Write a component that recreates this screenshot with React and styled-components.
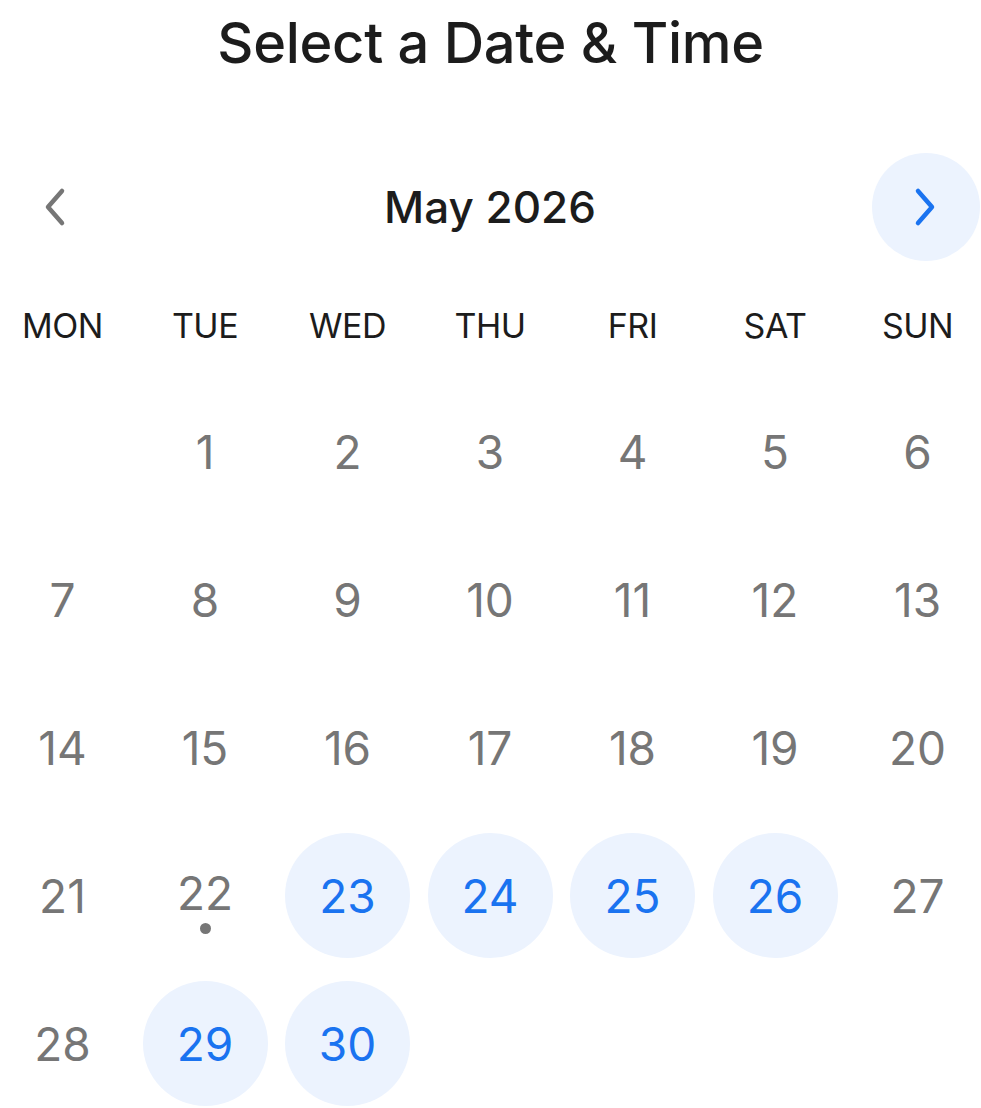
import styled, { createGlobalStyle } from "styled-components";

const GlobalStyle = createGlobalStyle`
  html, body {
    margin: 0;
    padding: 0;
    background: #ffffff;
  }
  body {
    font-family: Inter, "Noto Sans", "Liberation Sans", sans-serif;
    -webkit-font-smoothing: antialiased;
  }
`;

const WEEKDAYS = ["MON", "TUE", "WED", "THU", "FRI", "SAT", "SUN"];
const AVAILABLE = [23, 24, 25, 26, 29, 30];
const MARKED = 22;
const LEADING_BLANKS = 1;
const DAYS_IN_MONTH = 30;

const ChevronLeft = () => (
  <svg width="28" height="40" viewBox="0 0 28 40" fill="none">
    <path
      d="M22 4 L8 20 L22 36"
      stroke="currentColor"
      strokeWidth="4.5"
      strokeLinecap="round"
      strokeLinejoin="round"
    />
  </svg>
);

const ChevronRight = () => (
  <svg width="28" height="40" viewBox="0 0 28 40" fill="none">
    <path
      d="M6 4 L20 20 L6 36"
      stroke="currentColor"
      strokeWidth="4.5"
      strokeLinecap="round"
      strokeLinejoin="round"
    />
  </svg>
);

const App = () => {
  const cells = [];
  for (let i = 0; i < LEADING_BLANKS; i++) cells.push(null);
  for (let d = 1; d <= DAYS_IN_MONTH; d++) cells.push(d);

  return (
    <>
      <GlobalStyle />
      <Page>
        <Title>Select a Date &amp; Time</Title>
        <Nav>
          <NavButton aria-label="Previous month">
            <ChevronLeft />
          </NavButton>
          <Month>May 2026</Month>
          <NavButton $active aria-label="Next month">
            <ChevronRight />
          </NavButton>
        </Nav>
        <Weekdays>
          {WEEKDAYS.map((w) => (
            <Weekday key={w}>{w}</Weekday>
          ))}
        </Weekdays>
        <Days>
          {cells.map((d, i) =>
            d === null ? (
              <Cell key={"b" + i} />
            ) : (
              <Cell key={d}>
                <Day $available={AVAILABLE.includes(d)} $marked={d === MARKED}>
                  <Num>{d}</Num>
                  {d === MARKED && <Dot />}
                </Day>
              </Cell>
            )
          )}
        </Days>
      </Page>
    </>
  );
};

const Page = styled.div`
  width: 981px;
  padding-top: 9px;
  box-sizing: border-box;
`;

const Title = styled.h1`
  margin: 0;
  text-align: center;
  font-size: 56px;
  line-height: 68px;
  font-weight: 500;
  color: #1c1c1c;
  letter-spacing: -0.3px;
`;

const Nav = styled.div`
  margin-top: 76px;
  width: 980px;
  height: 108px;
  display: flex;
  align-items: center;
  justify-content: space-between;
`;

const NavButton = styled.button`
  width: 108px;
  height: 108px;
  border: none;
  padding: 0;
  border-radius: 50%;
  display: flex;
  align-items: center;
  justify-content: center;
  cursor: pointer;
  background: ${(p) => (p.$active ? "#ecf3fe" : "transparent")};
  color: ${(p) => (p.$active ? "#1a73f0" : "#767676")};
`;

const Month = styled.div`
  font-size: 44px;
  line-height: 52px;
  font-weight: 500;
  color: #1c1c1c;
`;

const Weekdays = styled.div`
  margin-top: 45px;
  width: 980px;
  display: grid;
  grid-template-columns: repeat(7, 125px);
  column-gap: 17.5px;
`;

const Weekday = styled.div`
  text-align: center;
  font-size: 34px;
  line-height: 40px;
  font-weight: 400;
  color: #1c1c1c;
  letter-spacing: -0.5px;
`;

const Days = styled.div`
  margin-top: 43px;
  width: 980px;
  display: grid;
  grid-template-columns: repeat(7, 125px);
  grid-auto-rows: 125px;
  column-gap: 17.5px;
  row-gap: 23px;
`;

const Cell = styled.div`
  display: flex;
  align-items: center;
  justify-content: center;
`;

const Day = styled.div`
  width: 125px;
  height: 125px;
  border-radius: 50%;
  display: flex;
  flex-direction: column;
  align-items: center;
  justify-content: center;
  box-sizing: border-box;
  padding-top: ${(p) => (p.$marked ? "11px" : "0")};
  background: ${(p) => (p.$available ? "#ecf3fe" : "transparent")};
  color: ${(p) => (p.$available ? "#1a73f0" : "#767676")};
`;

const Num = styled.span`
  font-size: 46px;
  line-height: 48px;
  font-weight: 400;
`;

const Dot = styled.span`
  width: 11px;
  height: 11px;
  margin-top: 6px;
  border-radius: 50%;
  background: #767676;
`;

export default App;
